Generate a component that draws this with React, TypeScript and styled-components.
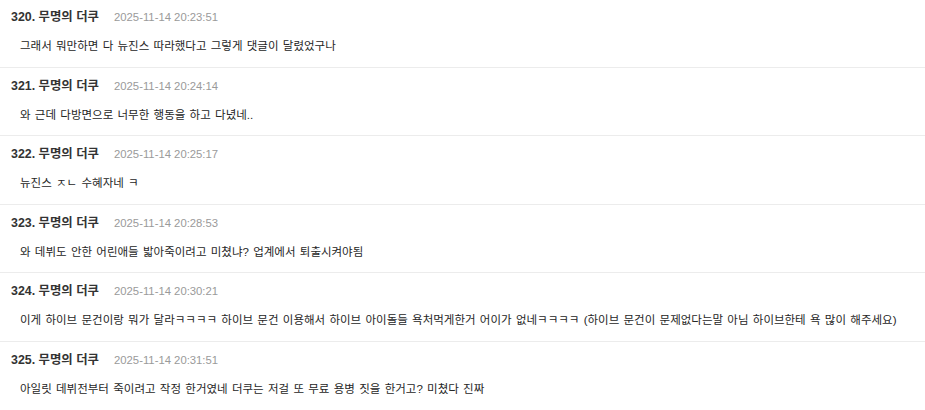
import React from "react";
import styled, { createGlobalStyle } from "styled-components";

const GlobalStyle = createGlobalStyle`
  html, body {
    margin: 0;
    padding: 0;
    background: #ffffff;
  }
  body {
    font-family: "Liberation Sans", "Noto Sans CJK KR", sans-serif;
    -webkit-font-smoothing: antialiased;
  }
`;

const List = styled.ul`
  list-style: none;
  margin: 0;
  padding: 0;
  width: 925px;
`;

const Item = styled.li`
  padding: 10px 11px 12.5px;
  border-bottom: 1px solid #ececec;

  &:first-child {
    padding-top: 9.4px;
  }

  &:last-child {
    border-bottom: none;
  }
`;

const Header = styled.div`
  display: flex;
  align-items: baseline;
  height: 16px;
  line-height: 16px;
`;

const Author = styled.span`
  font-size: 12.4px;
  font-weight: 700;
  color: #333333;
`;

const DateText = styled.span`
  margin-left: 15px;
  font-size: 11.3px;
  color: #9a9a9a;
`;

const Body = styled.p`
  margin: 13px 0 0;
  padding-left: 9px;
  height: 16px;
  line-height: 16px;
  font-size: 11.5px;
  word-spacing: 1.1px;
  color: #262626;
  white-space: nowrap;
`;

type Comment = { no: number; date: string; text: string };

const comments: Comment[] = [
  { no: 320, date: "2025-11-14 20:23:51", text: "그래서 뭐만하면 다 뉴진스 따라했다고 그렇게 댓글이 달렸었구나" },
  { no: 321, date: "2025-11-14 20:24:14", text: "와 근데 다방면으로 너무한 행동을 하고 다녔네.." },
  { no: 322, date: "2025-11-14 20:25:17", text: "뉴진스 ㅈㄴ 수혜자네 ㅋ" },
  { no: 323, date: "2025-11-14 20:28:53", text: "와 데뷔도 안한 어린애들 밟아죽이려고 미쳤냐? 업계에서 퇴출시켜야됨" },
  {
    no: 324,
    date: "2025-11-14 20:30:21",
    text: "이게 하이브 문건이랑 뭐가 달라ㅋㅋㅋㅋ 하이브 문건 이용해서 하이브 아이돌들 욕처먹게한거 어이가 없네ㅋㅋㅋㅋ (하이브 문건이 문제없다는말 아님 하이브한테 욕 많이 해주세요)",
  },
  { no: 325, date: "2025-11-14 20:31:51", text: "아일릿 데뷔전부터 죽이려고 작정 한거였네 더쿠는 저걸 또 무료 용병 짓을 한거고? 미쳤다 진짜" },
];

export default function App() {
  return (
    <>
      <GlobalStyle />
      <List>
        {comments.map((c) => (
          <Item key={c.no}>
            <Header>
              <Author>{c.no}. 무명의 더쿠</Author>
              <DateText>{c.date}</DateText>
            </Header>
            <Body>{c.text}</Body>
          </Item>
        ))}
      </List>
    </>
  );
}
